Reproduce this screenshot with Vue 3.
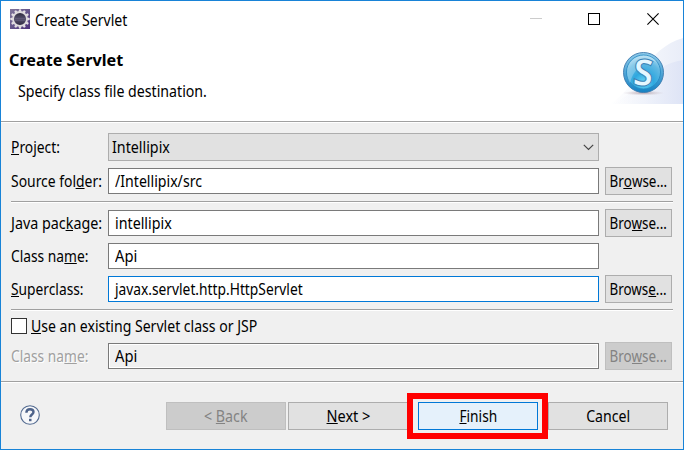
<script setup>
const project = 'Intellipix'
const rows = [
  { label: ['Java pac', 'k', 'age:'], value: 'intellipix', cls: 'java', browse: ['Bro', 'w', 'se...'] },
  { label: ['Class na', 'm', 'e:'], value: 'Api', cls: 'cname' },
  { label: ['', 'S', 'uperclass:'], value: 'javax.servlet.http.HttpServlet', cls: 'super', focus: true, browse: ['Brows', 'e', '...'] },
]
const teeth = Array.from({ length: 12 }, (_, i) => i * 30)
</script>

<template>
  <div class="window">
    <header class="titlebar">
      <svg class="appicon" width="20" height="20" viewBox="0 0 20 20">
        <defs>
          <linearGradient id="purple" x1="0" y1="0" x2="1" y2="1">
            <stop offset="0" stop-color="#81769a" />
            <stop offset="0.5" stop-color="#65558b" />
            <stop offset="1" stop-color="#4c307b" />
          </linearGradient>
          <linearGradient id="core" x1="0" y1="0" x2="0" y2="1">
            <stop offset="0" stop-color="#292638" />
            <stop offset="0.5" stop-color="#57516f" />
            <stop offset="1" stop-color="#29243b" />
          </linearGradient>
        </defs>
        <rect width="20" height="20" fill="url(#purple)" />
        <rect v-for="a in teeth" :key="a" x="8.8" y="0.3" width="2.4" height="3.5" rx="0.8" fill="#e4dfe4" :transform="`rotate(${a} 10 10)`" />
        <circle cx="10" cy="10" r="7" fill="url(#core)" stroke="#dedade" stroke-width="1.9" />
        <path d="M5 9.5h10M4.5 11.5h11" stroke="#6b6482" stroke-width="0.5" />
      </svg>
      <span class="title"><span class="t-title">Create Servlet</span></span>
      <svg class="controls" width="130" height="12" viewBox="0 0 130 12" shape-rendering="crispEdges">
        <path d="M0 5.5h12" stroke="#ccc" />
        <rect x="58.5" y="0.5" width="11" height="11" fill="none" stroke="#000" />
        <path d="M117.4 0.4l11.2 11.2M128.6 0.4l-11.2 11.2" stroke="#000" stroke-width="1.1" shape-rendering="auto" />
      </svg>
    </header>

    <section class="banner">
      <div class="banner-text">
        <h1><span class="t-head">Create Servlet</span></h1>
        <p><span class="t-desc">Specify class file destination.</span></p>
      </div>
      <svg class="banner-art" width="76" height="67" viewBox="0 1 76 67">
        <defs>
          <linearGradient id="w1" x1="0" y1="0" x2="1" y2="0">
            <stop offset="0" stop-color="#fff" /><stop offset="1" stop-color="#e9edf8" />
          </linearGradient>
          <linearGradient id="w2" x1="0" y1="0" x2="1" y2="0">
            <stop offset="0" stop-color="#f4f6fc" stop-opacity="0" /><stop offset="1" stop-color="#dee4f6" />
          </linearGradient>
          <radialGradient id="ball" cx="0.5" cy="0.82" r="0.85">
            <stop offset="0" stop-color="#6ad6f6" /><stop offset="0.35" stop-color="#2fa8df" />
            <stop offset="0.7" stop-color="#62b9e3" /><stop offset="1" stop-color="#b8e1f4" />
          </radialGradient>
          <linearGradient id="rim" x1="0" y1="0" x2="0" y2="1">
            <stop offset="0" stop-color="#8fcbea" /><stop offset="1" stop-color="#1482c4" />
          </linearGradient>
          <radialGradient id="shade"><stop offset="0" stop-color="#a88f98" stop-opacity="0.8" /><stop offset="1" stop-color="#c9bec6" stop-opacity="0" /></radialGradient>
        </defs>
        <path d="M3 68C30 52 40 12 76 2V68Z" fill="url(#w1)" />
        <path d="M3 68C29 61 42 29 76 24V68Z" fill="url(#w2)" />
        <ellipse cx="36.5" cy="57" rx="21" ry="2.5" fill="url(#shade)" />
        <circle cx="36.5" cy="36.5" r="20" fill="url(#rim)" stroke="#3d79ad" stroke-width="0.9" />
        <circle cx="36.5" cy="36" r="17" fill="url(#ball)" stroke="#2688c2" stroke-width="0.8" />
        <path d="M20 36C20 20 42 14 50 26C43 23 29 27 23 47Q20 43 20 36Z" fill="#fff" opacity="0.25" />
        <text class="glyph" x="36.4" y="49.8" text-anchor="middle" transform="rotate(5 36.5 36.5)">S</text>
      </svg>
    </section>

    <main class="form">
      <div class="row">
        <label><span class="t-project"><u>P</u>roject:</span></label>
        <div class="combo">
          <span class="t-intel">{{ project }}</span>
          <svg width="11" height="7" viewBox="0 0 11 7"><path d="M0.8 0.8l4.7 4.7l4.7-4.7" fill="none" stroke="#444" stroke-width="1.2" /></svg>
        </div>
      </div>
      <div class="row">
        <label><span class="t-source">Source fol<u>d</u>er:</span></label>
        <div class="field"><span class="t-src">/Intellipix/src</span></div>
        <button class="btn browse"><span class="t-browse">Br<u>o</u>wse...</span></button>
      </div>
      <div class="rule"></div>
      <div class="group">
        <div v-for="r in rows" :key="r.cls" class="row">
          <label><span :class="'t-' + r.cls">{{ r.label[0] }}<u>{{ r.label[1] }}</u>{{ r.label[2] }}</span></label>
          <div class="field" :class="{ focus: r.focus }"><span :class="'v-' + r.cls">{{ r.value }}</span></div>
          <button v-if="r.browse" class="btn browse"><span class="t-browse">{{ r.browse[0] }}<u>{{ r.browse[1] }}</u>{{ r.browse[2] }}</span></button>
        </div>
      </div>
      <div class="rule"></div>
      <div class="check"><i></i><span class="t-check"><u>U</u>se an existing Servlet class or JSP</span></div>
      <div class="row off">
        <label><span class="t-cname">Class na<u>m</u>e:</span></label>
        <div class="field"><span class="v-cname">Api</span></div>
        <button class="btn browse disabled"><span class="t-browse">Bro<u>w</u>se...</span></button>
      </div>
    </main>

    <footer class="footer">
      <svg class="help" width="20" height="20" viewBox="0 0 20 20">
        <circle cx="10" cy="10" r="9.3" fill="#f6f7f9" stroke="#526a90" stroke-width="1.1" />
        <path d="M6.4 7.8C6.4 5.3 7.8 4.2 10 4.2c2.1 0 3.5 1 3.5 2.8 0 2.5-3.2 2.6-3.2 5.2" fill="none" stroke="#4e638a" stroke-width="2.4" />
        <rect x="9" y="13.8" width="2.5" height="2.4" fill="#4e638a" />
      </svg>
      <button class="btn disabled back"><span class="t-back">&lt; <u>B</u>ack</span></button>
      <button class="btn next"><span class="t-next"><u>N</u>ext &gt;</span></button>
      <div class="mark"><button class="btn finish"><span class="t-finish"><u>F</u>inish</span></button></div>
      <button class="btn cancel"><span class="t-cancel">Cancel</span></button>
    </footer>
  </div>
</template>

<style>
body { margin: 0; overflow: hidden; }
</style>

<style scoped>
* { box-sizing: border-box; }
.window {
  width: 684px; height: 450px; border: 1px solid #1883d7; background: #f0f0f0;
  font-family: "Noto Sans", "Open Sans", sans-serif; font-size: 15.5px; line-height: 22px; color: #000;
  display: flex; flex-direction: column; white-space: nowrap;
}
span { display: inline-block; }
u { text-decoration: none; border-bottom: 1px solid currentColor; display: inline-block; line-height: 14px; }

/* Condensed text widths */
[class^="t-"], [class^="v-"] { transform-origin: 0 50%; transform: scaleX(0.91); }
.t-head { transform: scaleX(1.012); }
.t-desc { transform: scaleX(0.913); }
.t-project { transform: scaleX(0.893); }
.t-source { transform: scaleX(0.897); }
.t-java { transform: scaleX(0.925); }
.t-cname, .t-super, .v-super { transform: scaleX(0.889); }
.t-intel, .v-java { transform: scaleX(0.92); }
.v-cname { transform: scaleX(0.95); }
.t-src { transform: scaleX(0.912); }
.t-check { transform: scaleX(0.907); }
.btn span { transform-origin: 50% 50%; }
.t-browse { transform: scaleX(0.865); }
.t-back { transform: scaleX(0.92); }
.t-next { transform: scaleX(0.935); }
.t-finish { transform: scaleX(0.885); }

.titlebar { height: 36px; background: #fff; display: flex; align-items: center; padding: 0 23px 0 9px; }
.appicon { margin-right: 5px; }
.title { flex: 1; padding-top: 1px; }
.banner { height: 86px; background: #fff; border-bottom: 1px solid #fff; box-shadow: inset 0 -1px #a0a0a0; display: flex; justify-content: space-between; }
.banner-text { padding: 12px 0 0 8px; }
h1 { margin: 0; font-size: 16px; line-height: 22px; }
p { margin: 9px 0 0 9px; line-height: 22px; }
.banner-art { display: block; }
.glyph { font: 700 37px "Open Sans", sans-serif; fill: #e5f7ff; stroke: #3a83b7; stroke-width: 1; }
.form { height: 258px; padding: 10px 10px 0; display: flex; flex-direction: column; }
.row { display: flex; align-items: center; height: 28px; }
.row + .row { margin-top: 6px; }
.group .row + .row { margin-top: 5px; }
label { width: 97px; flex: none; height: 22px; }
label span { vertical-align: top; }
.combo { width: 491px; height: 28px; border: 1px solid #adadad; background: #e1e1e1; padding: 0 4px 0 3px; display: flex; align-items: center; justify-content: space-between; }
.field { width: 491px; height: 26px; border: 1px solid #7a7a7a; background: #fff; padding: 0 6px; line-height: 24px; }
.focus { border-color: #0078d7; }
.rule { height: 2px; margin: 6px 0; flex: none; width: 662px; background: #fff; border-top: 1px solid #a0a0a0; }
.btn { font: inherit; color: #000; height: 28px; padding: 0; border: 1px solid #adadad; background: #e1e1e1; border-radius: 0; display: flex; align-items: center; justify-content: center; flex: none; }
.btn.disabled { color: #838383; background: #ccc; border-color: #bfbfbf; }
.browse { width: 67px; margin-left: 6px; }
.check { height: 28px; display: flex; align-items: center; gap: 4px; margin-top: -5px; }
.check i { width: 16px; height: 16px; border: 1px solid #333; background: #fff; }
.off { margin-top: 2px; }
.off label { color: #a0a0a0; text-shadow: 1px 1px #fff; }
.off .field { background: #f0f0f0; box-shadow: inset 0 0 0 1px #fff; }
.footer { flex: 1; border-top: 1px solid #a0a0a0; box-shadow: inset 0 1px #fff; display: flex; align-items: flex-start; padding: 11px 15px 0 19px; }
.help { margin-top: 12px; }
.footer .btn { width: 120px; margin-top: 9px; }
.footer .back { margin-left: 126px; }
.footer .next { margin-left: 2px; }
.mark { width: 141px; height: 46px; border: 6px solid #f00; margin-left: -1px; padding: 0 5px; background: #f0f0f0; z-index: 1; }
.footer .finish { margin-top: 3px; border-color: #0078d7; background: #e5f1fb; }
</style>
